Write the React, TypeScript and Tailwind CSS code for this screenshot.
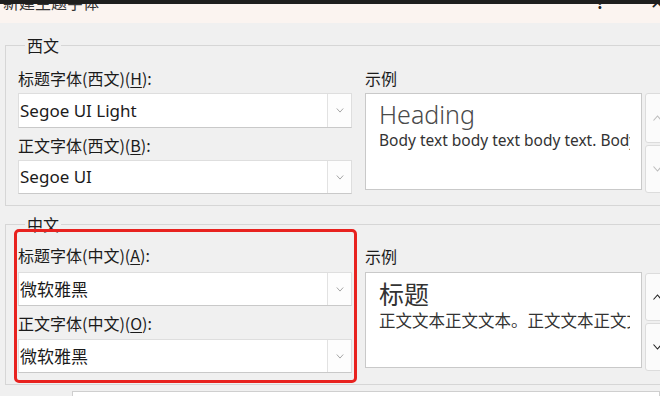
const cjk = "font-['Noto_Sans_CJK_SC','Noto_Sans',sans-serif]";
const latin = "font-['Noto_Sans','Noto_Sans_CJK_SC',sans-serif]";

function Chevron({ up = false, className = "" }: { up?: boolean; className?: string }) {
  return (
    <svg width="10" height="6" viewBox="0 0 10 6" className={className}>
      <path
        d={up ? "M1 5.5 L5 1 L9 5.5" : "M1 0.5 L5 5 L9 0.5"}
        fill="none"
        stroke="currentColor"
        strokeWidth="1.1"
      />
    </svg>
  );
}

function Label({ text, accel, tail }: { text: string; accel: string; tail: string }) {
  return (
    <div className={`${cjk} h-[20px] text-[16px] leading-[20px] text-[#1b1b1b]`}>
      {text}
      <span className="underline underline-offset-2">{accel}</span>
      {tail}
    </div>
  );
}

function Select({ value, zh = false, h }: { value: string; zh?: boolean; h: string }) {
  return (
    <div className={`flex ${h} bg-white border border-[#dedede] border-b-[#c9c9c9]`}>
      <div
        className={`flex-1 flex items-center pl-[1px] text-[17px] text-[#1b1b1b] ${zh ? cjk : latin}`}
      >
        {value}
      </div>
      <div className="w-[24px] flex items-center justify-center border-l border-[#e2e2e2] bg-[#fdfdfd] text-[#9a9a9a]">
        <Chevron className="w-[8px] h-[5px]" />
      </div>
    </div>
  );
}

function SpinButton({ up = false, h }: { up?: boolean; h: string }) {
  return (
    <div className={`${h} w-[22px] flex items-center pl-[6px] bg-[#fbfbfb] border border-[#dcdcdc] rounded-[3px]`}>
      <Chevron up={up} className="w-[11px] h-[6px]" />
    </div>
  );
}

export default function App() {
  return (
    <div className="relative w-[660px] h-[396px] overflow-hidden bg-[#f0f0f0]">
      {/* window chrome */}
      <div className="h-[4px] bg-[#1e1e1e]" />
      <div className={`${cjk} flex h-[19px] overflow-hidden whitespace-nowrap bg-[#fbf4f0] text-[16px] leading-[16px] text-[#333]`}>
        <span className="shrink-0 ml-[3px] -mt-[10px]">新建主题字体</span>
        <span className="shrink-0 ml-[497px] -mt-[10px] font-bold text-[#222]">?</span>
        <span className="shrink-0 ml-[46px] -mt-[11px] text-[18px] text-[#222]">✕</span>
      </div>

      {/* 西文 */}
      <fieldset className="ml-[5px] mt-[14px] border-l border-t border-b border-[#d6d6d6] pl-[12px] pb-[11px]">
        <legend className={`${cjk} ml-[7px] px-[2px] text-[16px] leading-[16px] text-[#1b1b1b]`}>
          西文
        </legend>
        <div className="flex mt-[15px]">
          <div className="w-[334px] flex flex-col">
            <Label text="标题字体(西文)(" accel="H" tail="):" />
            <div className="mt-[5px]">
              <Select value="Segoe UI Light" h="h-[35px]" />
            </div>
            <div className="mt-[7px]">
              <Label text="正文字体(西文)(" accel="B" tail="):" />
            </div>
            <div className="mt-[5px]">
              <Select value="Segoe UI" h="h-[34px]" />
            </div>
          </div>
          <div className="ml-[13px] w-[277px] flex flex-col">
            <div className={`${cjk} h-[20px] text-[16px] leading-[20px] text-[#1b1b1b]`}>示例</div>
            <div className={`${latin} mt-[5px] h-[97px] bg-white border border-[#c9c9c9] pl-[13px] pr-[11px] overflow-hidden whitespace-nowrap`}>
              <div className="mt-[5px] text-[25px] leading-[30px] font-light text-[#4a4a4a]">Heading</div>
              <div className="overflow-hidden text-[15.5px] leading-[22px] text-[#333]">
                Body text body text body text. Body text body text.
              </div>
            </div>
          </div>
          <div className="ml-[3px] mt-[25px] flex flex-col gap-[2px] text-[#bdbdbd]">
            <SpinButton up h="h-[50px]" />
            <SpinButton h="h-[48px]" />
          </div>
        </div>
      </fieldset>

      {/* 中文 */}
      <fieldset className="ml-[5px] mt-[10px] border-l border-t border-b border-[#d6d6d6] pl-[12px] pb-[11px]">
        <legend className={`${cjk} ml-[7px] px-[2px] text-[16px] leading-[16px] text-[#1b1b1b]`}>
          中文
        </legend>
        <div className="flex mt-[13px]">
          <div className="w-[334px] flex flex-col">
            <Label text="标题字体(中文)(" accel="A" tail="):" />
            <div className="mt-[7px]">
              <Select value="微软雅黑" zh h="h-[34px]" />
            </div>
            <div className="mt-[7px]">
              <Label text="正文字体(中文)(" accel="O" tail="):" />
            </div>
            <div className="mt-[6px]">
              <Select value="微软雅黑" zh h="h-[34px]" />
            </div>
          </div>
          <div className="ml-[13px] w-[277px] flex flex-col">
            <div className={`${cjk} h-[20px] mt-[1px] text-[16px] leading-[20px] text-[#1b1b1b]`}>示例</div>
            <div className={`${cjk} mt-[6px] h-[96px] bg-white border border-[#c9c9c9] pl-[13px] pr-[11px] overflow-hidden whitespace-nowrap`}>
              <div className="mt-[4px] text-[25px] leading-[32px] text-[#333]">标题</div>
              <div className="overflow-hidden text-[16.5px] leading-[22px] text-[#333]">
                正文文本正文文本。正文文本正文文本。
              </div>
            </div>
          </div>
          <div className="ml-[3px] mt-[28px] flex flex-col gap-[2px] text-[#222]">
            <SpinButton up h="h-[48px]" />
            <SpinButton h="h-[48px]" />
          </div>
        </div>
      </fieldset>

      <div className="ml-[72px] mt-[6px] h-[12px] bg-white border border-[#cfcfcf]" />

      {/* red annotation box */}
      <div className="pointer-events-none absolute left-[14px] top-[229px] w-[343px] h-[154px] border-[3px] border-[#e8221f] rounded-[5px]" />
    </div>
  );
}
